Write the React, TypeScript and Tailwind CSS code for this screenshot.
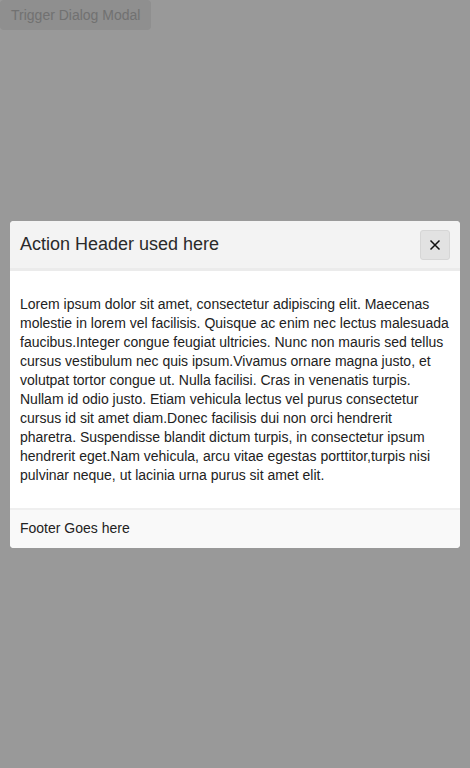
import { useState } from "react";

const LOREM =
  "Lorem ipsum dolor sit amet, consectetur adipiscing elit. Maecenas molestie in lorem vel facilisis. Quisque ac enim nec lectus malesuada faucibus.Integer congue feugiat ultricies. Nunc non mauris sed tellus cursus vestibulum nec quis ipsum.Vivamus ornare magna justo, et volutpat tortor congue ut. Nulla facilisi. Cras in venenatis turpis. Nullam id odio justo. Etiam vehicula lectus vel purus consectetur cursus id sit amet diam.Donec facilisis dui non orci hendrerit pharetra. Suspendisse blandit dictum turpis, in consectetur ipsum hendrerit eget.Nam vehicula, arcu vitae egestas porttitor,turpis nisi pulvinar neque, ut lacinia urna purus sit amet elit.";

export default function App() {
  const [open, setOpen] = useState(true);

  return (
    <div className="min-h-screen bg-white font-['Liberation_Sans',Arial,sans-serif] text-[#333]">
      {/* Trigger */}
      <button
        onClick={() => setOpen(true)}
        className="h-[30px] px-[11px] rounded-[4px] bg-[#eeeeee] text-[14px] text-[#bdbdbd]"
      >
        Trigger Dialog Modal
      </button>

      {open && (
        <div className="fixed inset-0 bg-black/40 flex items-center justify-center px-[10px]">
          <div className="w-full bg-white rounded-[4px] overflow-hidden">
            {/* Header */}
            <div className="h-[50px] flex items-center justify-between px-[10px] pt-[1px] bg-[#f3f3f3] border-b-[3px] border-[#ebebeb]">
              <h2 className="text-[18px] text-[#2a2a2a]">Action Header used here</h2>
              <button
                onClick={() => setOpen(false)}
                className="w-[30px] h-[30px] flex items-center justify-center rounded-[3px] bg-[#e2e2e2] border border-[#d6d6d6]"
              >
                <svg width="12" height="12" viewBox="0 0 12 12">
                  <path d="M1.5 1.5 L10.5 10.5 M10.5 1.5 L1.5 10.5" stroke="#111" strokeWidth="1.5" />
                </svg>
              </button>
            </div>

            {/* Body */}
            <div className="px-[10px] pt-[24px] pb-[23px]">
              <p className="text-[14px] leading-[19px] text-[#222]">{LOREM}</p>
            </div>

            {/* Footer */}
            <div className="h-[40px] flex items-center px-[10px] bg-[#f9f9f9] border-t-2 border-[#efefef]">
              <span className="text-[14px] text-[#222]">Footer Goes here</span>
            </div>
          </div>
        </div>
      )}
    </div>
  );
}
